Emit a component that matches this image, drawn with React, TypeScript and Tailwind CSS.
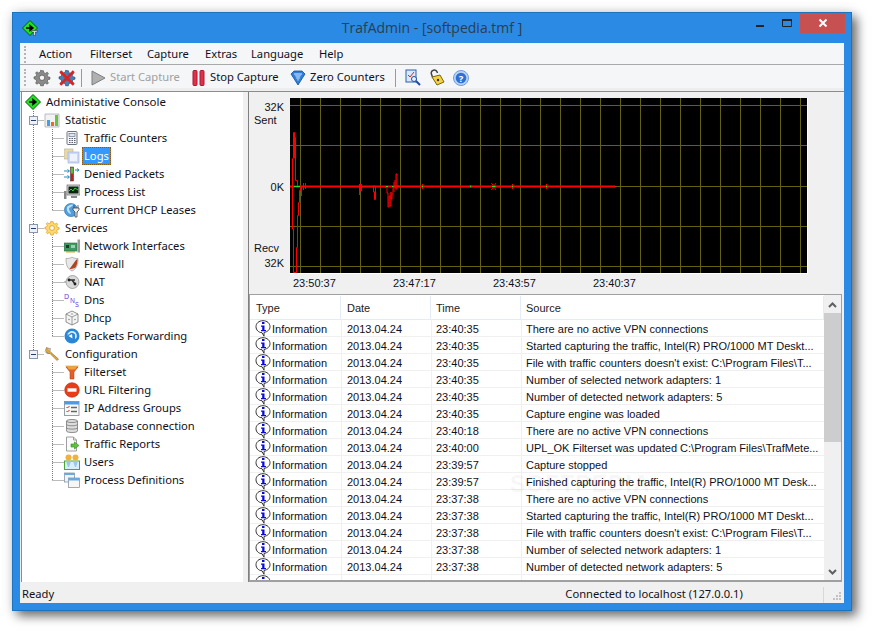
import React from "react";

const font = { fontFamily: '"Noto Sans", Tahoma, sans-serif' };
const listFont = { fontFamily: '"Liberation Sans", Arial, sans-serif' };

type S = { children: React.ReactNode; w?: number; className?: string };
const Ico = ({ children, w = 16, className = "" }: S) => (
  <svg width={w} height={w} viewBox="0 0 16 16" className={"shrink-0 " + className}>{children}</svg>
);

const Gear = ({ c = "#8a8a8a", d = "#555" }: { c?: string; d?: string }) => (
  <g>
    <path d="M8 1.500l1.200 0 .4 1.800 1.400.6 1.600-1 1.100 1.100-1 1.600.6 1.400 1.800.4v1.600l-1.800.4-.6 1.400 1 1.600-1.100 1.100-1.600-1-1.400.6-.4 1.800H6.800l-.4-1.800-1.400-.6-1.600 1-1.100-1.100 1-1.600-.6-1.400L.9 8.600V7l1.800-.4.6-1.400-1-1.600 1.100-1.100 1.600 1 1.400-.6.4-1.800z" fill={c} stroke={d} strokeWidth=".6" />
    <circle cx="8" cy="7.800" r="2.400" fill="#f5f6f8" stroke={d} strokeWidth=".7" />
  </g>
);

const RootIcon = ({ t }: { t?: boolean }) => (
  <Ico>
    <path d="M8 .5L15.500 8 8 15.500.5 8z" fill="#22e022" stroke="#0a5a0a" />
    <path d="M4 8h6M8 5.500L11 8l-3 2.500z" stroke="#000" strokeWidth="1.400" fill="#000" />
    {t && <path d="M9.500 10.500h6v1.500h-2v3.500h-2V12h-2z" fill="#ddd" stroke="#222" strokeWidth=".5" />}
  </Ico>
);

const icons: Record<string, React.ReactNode> = {
  statistic: (
    <Ico>
      <path d="M1 2h14v13H1z" fill="#f2f2f2" stroke="#aab" strokeWidth=".8" />
      <rect x="3" y="8" width="3" height="6" fill="#4a9be8" />
      <rect x="7" y="10" width="3" height="4" fill="#ef6a1e" />
      <rect x="11" y="3" width="3" height="11" fill="#6cc23a" />
    </Ico>
  ),
  counters: (
    <Ico>
      <rect x="3" y="1.500" width="10" height="13" rx="1" fill="#f4f6f8" stroke="#6d7680" />
      <rect x="5" y="3.500" width="6" height="3" fill="#dbe7f2" stroke="#6d7680" strokeWidth=".7" />
      <path d="M5 8.500h1.500M7.500 8.500H9M10 8.500h1.500M5 10.500h1.500M7.500 10.500H9M10 10.500h1.500M5 12.500h1.500M7.500 12.500H9M10 12.500h1.500" stroke="#56616c" />
    </Ico>
  ),
  logs: (
    <Ico>
      <rect x="0" y="1" width="9" height="10" fill="#ead9a8" stroke="#b9b7a0" strokeWidth=".7" />
      <rect x="4" y="4" width="11" height="11" fill="#cdd8f5" stroke="#a6b4dc" strokeWidth=".7" />
      <rect x="6" y="6" width="7" height="7" fill="#eef2fd" />
    </Ico>
  ),
  denied: (
    <Ico>
      <rect x="6.500" y="1" width="3" height="14" fill="#b8231f" stroke="#333" strokeWidth=".5" />
      <rect x="7" y="1.500" width="2" height="6" fill="#55c13b" />
      <path d="M0 5h5M3.500 3.500L5.500 5l-2 1.500M11 4h4M13 2.500L15 4l-2 1.500M0 11h5M3.500 9.500L5.500 11l-2 1.500" stroke="#1f8fb8" fill="none" />
    </Ico>
  ),
  process: (
    <Ico>
      <rect x="3" y="1" width="13" height="10" fill="#d8d8d8" stroke="#666" strokeWidth=".7" />
      <rect x="4.500" y="2.500" width="10" height="7" fill="#0c2410" />
      <path d="M5 7l2-2 2 2 2-3 3 2" stroke="#3fe04a" fill="none" strokeWidth=".9" />
      <path d="M7 12h6v2H7z" fill="#888" />
      <rect x="0" y="7" width="2.500" height="8" fill="#888" />
    </Ico>
  ),
  dhcpl: (
    <Ico>
      <circle cx="7" cy="8" r="6.600" fill="#4d9fe0" stroke="#2f6ea8" strokeWidth=".6" />
      <path d="M3 5c2-2 5-3 6-2-1 2-4 2-4 4s2 3 2 5c-2 0-5-3-4-7z" fill="#bfe0f7" />
      <path d="M10 3v3M14 3v3M9 6h6v2l-2 2v5h-2v-5L9 8z" fill="#eee" stroke="#444" strokeWidth=".8" />
    </Ico>
  ),
  services: (
    <Ico>
      <g transform="translate(0 .2)"><Gear c="#fcd96a" d="#d89010" /></g>
    </Ico>
  ),
  network: (
    <Ico>
      <path d="M0 5h13v8H0z" fill="#3f9a62" stroke="#2d6a45" strokeWidth=".6" />
      <rect x="2" y="7" width="3" height="3" fill="#1d3a28" />
      <rect x="7" y="7" width="4" height="3" fill="#9bd0ae" />
      <path d="M2 13h9v1.500H2z" fill="#c8a93c" />
      <path d="M13.500 1.500H16v13h-2.500z" fill="#9a9a9a" />
    </Ico>
  ),
  firewall: (
    <Ico>
      <path d="M2 2.500C5 2.500 7 2 8 1c1 1 3 1.500 6 1.500 0 6-1 10-6 12.500C3 12.500 2 8.500 2 2.500z" fill="#e8e8e8" stroke="#999" strokeWidth=".7" />
      <path d="M13.500 3c0 3-.5 6-2 8.500-2 1-5 1.500-6 1.500L12 4z" fill="#b4431f" />
    </Ico>
  ),
  nat: (
    <Ico>
      <circle cx="8.500" cy="8" r="6.500" fill="#d9d9d9" stroke="#888" strokeWidth=".7" />
      <path d="M5 6l6 0M8 6l3 4" stroke="#333" strokeWidth="1.500" />
      <circle cx="5" cy="6" r="1.400" fill="#222" />
      <circle cx="11" cy="10" r="1.400" fill="#222" />
      <path d="M0 8h2" stroke="#888" />
    </Ico>
  ),
  dns: (
    <svg width="16" height="17" viewBox="0 0 16 17" className="shrink-0">
      <text x="0" y="7" fontSize="7" fill="#6a3fe0" style={font}>D</text>
      <text x="6" y="11" fontSize="6.500" fill="#6a3fe0" style={font}>N</text>
      <text x="11" y="15" fontSize="7" fill="#6a3fe0" style={font}>S</text>
    </svg>
  ),
  dhcp: (
    <Ico>
      <path d="M8 1l6 3v8l-6 3-6-3V4z" fill="#f4f4f4" stroke="#777" strokeWidth=".8" />
      <path d="M2 4l6 3 6-3M8 7v8" stroke="#777" fill="none" strokeWidth=".7" />
      <circle cx="8" cy="4" r=".7" fill="#777" />
      <circle cx="5" cy="9.500" r=".7" fill="#777" />
      <circle cx="11" cy="9.500" r=".7" fill="#777" />
    </Ico>
  ),
  forward: (
    <Ico>
      <circle cx="8" cy="8" r="7.500" fill="#2a86d6" />
      <path d="M4 8a4 4 0 117 2.500" fill="none" stroke="#d8eefc" strokeWidth="1.800" />
      <path d="M3 6.500h8v4l-4 3-3-3z" fill="#2a86d6" />
      <path d="M3.500 5.500l4 2.500-3.500 2z" fill="#fff" transform="rotate(180 6 8)" />
    </Ico>
  ),
  config: (
    <Ico>
      <path d="M2.500 1.500l3 1.500v2l1.500 1.500L14.500 13l-1.500 1.500L6 7.500H4L1.500 4.500z" fill="#e3a43c" stroke="#8d6a2c" strokeWidth=".6" />
      <path d="M1 5.500c1 1.500 3 2 3.500 2" stroke="#888" fill="none" />
      <path d="M3.500 2l3 .5-.5 3" fill="#c8c8c8" stroke="#888" strokeWidth=".6" />
    </Ico>
  ),
  filterset: (
    <Ico>
      <path d="M1 1.500h14l-1 1.500H2z" fill="#f6c65b" />
      <path d="M2 3h12L10 8v7H6V8z" fill="#e4612a" stroke="#a33a14" strokeWidth=".5" />
      <path d="M3 3h10l-2 2.500H5z" fill="#f3a13b" />
    </Ico>
  ),
  url: (
    <Ico>
      <circle cx="8" cy="8" r="7.300" fill="#e83e17" stroke="#b52a0c" strokeWidth=".6" />
      <rect x="3.500" y="6.300" width="9" height="3.400" fill="#fff" />
    </Ico>
  ),
  ipgroups: (
    <Ico>
      <rect x=".5" y="1.500" width="14.500" height="14" fill="#f8f8f8" stroke="#7d8793" strokeWidth=".8" />
      <rect x=".5" y="1.500" width="14.500" height="3" fill="#4a9be8" />
      <path d="M2.500 7l1 1 2-2M2.500 11l1 1 2-2" stroke="#d22" fill="none" />
      <path d="M7 7.500h6M7 11.500h6" stroke="#666" strokeWidth="1.300" />
    </Ico>
  ),
  database: (
    <Ico>
      <path d="M2.500 3c0-2 11-2 11 0v10c0 2-11 2-11 0z" fill="#dcdcdc" stroke="#777" strokeWidth=".8" />
      <path d="M2.500 3c0 2 11 2 11 0M2.500 6.300c0 2 11 2 11 0M2.500 9.600c0 2 11 2 11 0" stroke="#777" fill="none" strokeWidth=".8" />
    </Ico>
  ),
  reports: (
    <Ico>
      <path d="M2.500 1h7l3 3v11h-10z" fill="#fafafa" stroke="#888" strokeWidth=".8" />
      <path d="M9.500 1v3h3" fill="none" stroke="#888" strokeWidth=".8" />
      <path d="M7 8h3.500V6l4.500 3.500-4.500 3.500v-2H7z" fill="#62c13d" stroke="#2e8a1d" strokeWidth=".6" />
    </Ico>
  ),
  users: (
    <Ico>
      <rect x=".5" y="7" width="15" height="8.500" fill="#d8eefc" stroke="#4aa83a" />
      <circle cx="4.500" cy="3.500" r="3" fill="#f4b03a" />
      <circle cx="11.500" cy="3.500" r="3" fill="#f4b03a" />
      <path d="M2 7h5l-2 6h-1zM9 7h5l-2 6h-1z" fill="#9bc6e8" />
    </Ico>
  ),
  defs: (
    <Ico>
      <rect x=".5" y="1" width="10" height="9" fill="#eef4fb" stroke="#7d8793" strokeWidth=".7" />
      <rect x=".5" y="1" width="10" height="2" fill="#6aa9e0" />
      <rect x="4.500" y="6" width="11" height="9.500" fill="#f6f6f6" stroke="#7d8793" strokeWidth=".7" />
      <rect x="4.500" y="6" width="11" height="2.500" fill="#6aa9e0" />
    </Ico>
  ),
};

type Node = { t: string; i: string; last?: boolean; sel?: boolean };
const groups: { t: string; i: string; kids: Node[]; last?: boolean }[] = [
  {
    t: "Statistic", i: "statistic", kids: [
      { t: "Traffic Counters", i: "counters" },
      { t: "Logs", i: "logs", sel: true },
      { t: "Denied Packets", i: "denied" },
      { t: "Process List", i: "process" },
      { t: "Current DHCP Leases", i: "dhcpl", last: true },
    ],
  },
  {
    t: "Services", i: "services", kids: [
      { t: "Network Interfaces", i: "network" },
      { t: "Firewall", i: "firewall" },
      { t: "NAT", i: "nat" },
      { t: "Dns", i: "dns" },
      { t: "Dhcp", i: "dhcp" },
      { t: "Packets Forwarding", i: "forward", last: true },
    ],
  },
  {
    t: "Configuration", i: "config", last: true, kids: [
      { t: "Filterset", i: "filterset" },
      { t: "URL Filtering", i: "url" },
      { t: "IP Address Groups", i: "ipgroups" },
      { t: "Database connection", i: "database" },
      { t: "Traffic Reports", i: "reports" },
      { t: "Users", i: "users" },
      { t: "Process Definitions", i: "defs", last: true },
    ],
  },
];

const dot = { stroke: "#777", strokeDasharray: "1 1", fill: "none" };

const Guide = ({ w, x, v, h, box, short }: { w: number; x: number; v?: boolean; h?: boolean; box?: boolean; short?: boolean }) => (
  <svg width={w} height={18} viewBox={`0 0 ${w} 18`} className="shrink-0">
    {v && <path d={`M${x + 0.5} 0V${short ? 9 : 18}`} {...dot} />}
    {h && <path d={`M${x + 0.5} 9.500H${w}`} {...dot} />}
    {box && (
      <g>
        <rect x={x - 4 + 0.5} y={5.5} width={8} height={8} fill="#eef2f8" stroke="#8a97a8" />
        <path d={`M${x - 2} 9.500h5`} stroke="#203f70" />
      </g>
    )}
  </svg>
);

const Tree = () => (
  <div className="w-[222px] shrink-0 bg-white pt-px border-l border-[#8c8c8c] overflow-hidden text-[11.200px] text-[#10101a]">
    <div className="flex items-center h-[18px] pl-[3px]">
      <RootIcon />
      <span className="ml-[5px] text-[11.500px] whitespace-nowrap">Administative Console</span>
    </div>
    {groups.map((g) => (
      <div key={g.t}>
        <div className="flex items-center h-[18px]">
          <Guide w={22} x={11} v box h short={g.last} />
          {icons[g.i]}
          <span className="ml-[5px] whitespace-nowrap">{g.t}</span>
        </div>
        {g.kids.map((k) => (
          <div key={k.t} className="flex items-center h-[18px]">
            <Guide w={22} x={11} v={!g.last} />
            <Guide w={20} x={8} v h short={k.last} />
            {icons[k.i]}
            {k.sel ? (
              <span className="ml-[2px] px-px h-[18px] leading-[16px] border border-dotted border-[#8a5a10] bg-[#3399ff] text-white whitespace-nowrap">{k.t}</span>
            ) : (
              <span className="ml-[4px] whitespace-nowrap">{k.t}</span>
            )}
          </div>
        ))}
      </div>
    ))}
  </div>
);

const hLines = [105, 145, 186, 226, 266];
const vLines = Array.from({ length: 26 }, (_, i) => 300 + i * 20);

const Chart = () => (
  <svg width="517" height="175" viewBox="290 98 517 175" className="block bg-black">
    {hLines.map((y) => (
      <path key={y} d={`M290 ${y + 0.5}H807`} stroke="#63630f" />
    ))}
    {vLines.map((x) => (
      <path key={x} d={`M${x + 0.5} 98V273`} stroke="#63630f" />
    ))}
    <path d="M290 186.500H615" stroke="#ff0000" strokeWidth="2" />
    <path
      d="M292.500 186V158.500M292.500 158.500V229M292.500 229H293.500V272.500H296.500V247.500H297.500V215.500H298.500V202.500H299.500V190.500H300.500V186M293.500 158.500V132.500H294.500V158.500M294.500 137.500H295.500V180.500H297.500V186M301.500 186V196M303.500 183V190M305.500 183V189"
      stroke="#ff0000"
      fill="none"
    />
    <rect x="359" y="184" width="3" height="7" fill="#ff0000" />
    <path d="M359.500 186V195M374.500 186H373.500V192H375.500V199.500H374.500V192M375.500 192V186M385.500 186V188M387 186V193H388V207H389V196H390V206H391V192V199H392V194H393V186M394 182V192M395 180V188H396V174H397V189H395M398 185V187" stroke="#ff0000" fill="none" />
    <path d="M422.500 184V189M470.500 185V188M491.500 183L496 190M496 183L491.500 190M512.500 184V189M546.500 184V189" stroke="#ff0000" fill="none" />
    <path d="M294 186.500H300M386 186.500H388M392 186.500H393.500M422 186.500H423M470 186.500H471M492 186.500H495.500M512 186.500H513M546 186.500H547" stroke="#22e022" />
  </svg>
);

const InfoIcon = () => (
  <svg width="16" height="17" viewBox="0 0 16 17" className="shrink-0">
    <path d="M8 .7C3.800.7 1 3.300 1 6.700s2.800 6 6 6l2 3.500v-3.700c3.400-.7 6-2.600 6-5.800C15 3.300 12.200.7 8 .7z" fill="#fff" stroke="#333" strokeWidth="1" />
    <rect x="7" y="2" width="2.500" height="2" fill="#0a0ae0" />
    <path d="M6 5.500h3.500v4.500H11v1.200H6V10h1.200V6.700H6z" fill="#0a0ae0" />
  </svg>
);

const d = "2013.04.24";
const vpn = "There are no active VPN connections";
const started = "Started capturing the traffic, Intel(R) PRO/1000 MT Deskt...";
const file = "File with traffic counters doesn't exist: C:\\Program Files\\T...";
const sel = "Number of selected network adapters: 1";
const det = "Number of detected network adapters: 5";
const rows: [string, string][] = [
  ["23:40:35", vpn],
  ["23:40:35", started],
  ["23:40:35", file],
  ["23:40:35", sel],
  ["23:40:35", det],
  ["23:40:35", "Capture engine was loaded"],
  ["23:40:18", vpn],
  ["23:40:00", "UPL_OK Filterset was updated C:\\Program Files\\TrafMete..."],
  ["23:39:57", "Capture stopped"],
  ["23:39:57", "Finished capturing the traffic, Intel(R) PRO/1000 MT Desk..."],
  ["23:37:38", vpn],
  ["23:37:38", started],
  ["23:37:38", file],
  ["23:37:38", sel],
  ["23:37:38", det],
  ["23:37:38", "Capture engine was loaded"],
];

const Th = ({ children, w, pl }: { children: React.ReactNode; w: string; pl: string }) => (
  <div className={`${w} ${pl} shrink-0 h-full pt-[2px] border-r border-[#e3ecf7] flex items-center`}>{children}</div>
);

const LogList = () => (
  <div className="flex-1 min-h-0 relative flex border-t border-l border-b-2 border-r border-[#a0a0a0] bg-white overflow-hidden mr-[2px] text-[11px] text-[#10101a]" style={listFont}>
    <div className="flex-1 min-w-0 overflow-hidden pt-px">
      <div className="flex h-[24px] border-b border-[#e3ecf7] text-[#222]">
        <Th w="w-[91px]" pl="pl-[6px]">Type</Th>
        <Th w="w-[90px]" pl="pl-[6px]">Date</Th>
        <Th w="w-[90px]" pl="pl-[5px]">Time</Th>
        <div className="flex-1 pl-[5px] pt-[2px] flex items-center border-r border-[#e3ecf7]">Source</div>
      </div>
      {rows.map(([t, s], i) => (
        <div key={i} className="flex h-[17px] border-b border-[#f0f0f0] whitespace-nowrap items-center">
          <div className="w-[91px] shrink-0 h-full flex items-center pl-[5px]">
            <InfoIcon />
            <span className="ml-[1px] pt-[2px]">Information</span>
          </div>
          <div className="w-[90px] shrink-0 h-full flex items-center pt-[2px] pl-[5px] border-l border-[#f0f0f0]">{d}</div>
          <div className="w-[90px] shrink-0 h-full flex items-center pt-[2px] pl-[4px] border-l border-[#f0f0f0]">{t}</div>
          <div className="flex-1 h-full flex items-center pt-[2px] pl-[4px] border-l border-[#f0f0f0] overflow-hidden">{s}</div>
        </div>
      ))}
    </div>
    <div className="w-[17px] shrink-0 bg-[#f0f0f0] flex flex-col items-center pt-px">
      <div className="h-[17px] w-full flex items-center justify-center">
        <svg width="9" height="6" viewBox="0 0 9 6"><path d="M1 5l3.500-3.500L8 5" stroke="#606060" strokeWidth="2" fill="none" /></svg>
      </div>
      <div className="w-full h-[129px] bg-[#cdcdcd]" />
      <div className="flex-1" />
      <div className="h-[17px] w-full flex items-center justify-center">
        <svg width="9" height="6" viewBox="0 0 9 6"><path d="M1 1l3.500 3.500L8 1" stroke="#606060" strokeWidth="2" fill="none" /></svg>
      </div>
    </div>
    <div className="absolute left-[260px] top-[172px] text-[23px] font-bold tracking-[1px] text-[#000000]/[0.05] pointer-events-none">SOFTPEDIA</div>
  </div>
);

const Graph = () => (
  <div className="h-[202px] shrink-0 flex bg-[#f0f0f0] text-[11px] text-[#10101a]" style={listFont}>
    <div className="w-[41px] shrink-0 flex flex-col pt-[8px] pl-[5px] leading-[14px]">
      <div className="text-right pr-[6px]">32K</div>
      <div className="-mt-px">Sent</div>
      <div className="text-right pr-[6px] mt-[53px]">0K</div>
      <div className="mt-[47px]">Recv</div>
      <div className="text-right pr-[6px] mt-px">32K</div>
    </div>
    <div className="pt-[6px]">
      <div className="border-r border-b border-white">
        <Chart />
      </div>
      <div className="flex pl-[3px] pt-px leading-[16px]">
        <span className="w-[100px]">23:50:37</span>
        <span className="w-[100px]">23:47:17</span>
        <span className="w-[100px]">23:43:57</span>
        <span className="w-[100px]">23:40:37</span>
      </div>
    </div>
  </div>
);

const Grip = () => (
  <div className="w-[3px] h-[17px] mr-[3px] shrink-0 border-l-2 border-dotted border-[#b5b5b5]" />
);

const Sep = () => <div className="w-px h-[18px] bg-[#9a9a9a] shrink-0" />;

const Toolbar = () => (
  <div className="h-[23px] shrink-0 flex items-center bg-[#f5f6f8] pl-[4px] pt-[2px] text-[11.200px] text-[#10101a] whitespace-nowrap">
    <Grip />
    <Ico w={18} className="ml-[3px]"><Gear /></Ico>
    <Ico w={18} className="ml-[7px]">
      <g><Gear c="#4a80b8" d="#24476e" /></g>
      <path d="M2 2l12 12M14 2L2 14" stroke="#dd2222" strokeWidth="2.400" />
    </Ico>
    <div className="ml-[5px]"><Sep /></div>
    <svg width="15" height="16" viewBox="0 0 15 16" className="ml-[9px] shrink-0">
      <path d="M1 1l13 7-13 7z" fill="#b0b0b0" stroke="#7e7e7e" />
    </svg>
    <span className="ml-[4px] w-[69px] text-[#a0a0a0]">Start Capture</span>
    <svg width="13" height="16" viewBox="0 0 13 16" className="ml-[13px] shrink-0">
      <rect x="1" y="0.500" width="4" height="15" rx="1" fill="#e0304a" stroke="#a81830" />
      <rect x="8" y="0.500" width="4" height="15" rx="1" fill="#e0304a" stroke="#a81830" />
    </svg>
    <span className="ml-[5px] w-[70px]">Stop Capture</span>
    <svg width="16" height="16" viewBox="0 0 16 16" className="ml-[10px] shrink-0">
      <path d="M1 4l3-3h8l3 3-7 11z" fill="#2e7fdc" stroke="#124f9c" strokeWidth=".8" />
      <path d="M4 3.500h8L8 11z" fill="#dff0ff" />
      <path d="M6 4v4M8 4v6M10 4v4" stroke="#2e7fdc" />
    </svg>
    <span className="ml-[4px] w-[75px]">Zero Counters</span>
    <div className="ml-[10px]"><Sep /></div>
    <svg width="17" height="17" viewBox="0 0 17 17" className="ml-[9px] shrink-0">
      <rect x="1" y="1" width="10" height="12" fill="#dbe8fb" stroke="#2b5fb0" />
      <path d="M3 6l2 2 4-5" stroke="#c83030" fill="none" />
      <circle cx="9" cy="10" r="2.500" fill="#eaf3ff" stroke="#1a4f9a" />
      <path d="M11 12l4 4" stroke="#1a4f9a" strokeWidth="2" />
    </svg>
    <svg width="16" height="17" viewBox="0 0 16 17" className="ml-[7px] shrink-0">
      <path d="M3 8V4a3 3 0 016 0v1" stroke="#444" strokeWidth="1.500" fill="none" transform="rotate(-20 6 6)" />
      <path d="M3 8l8-2 4 7-7 3z" fill="#f4d340" stroke="#7a6410" />
      <circle cx="9" cy="11" r="1.200" fill="#333" />
    </svg>
    <svg width="16" height="16" viewBox="0 0 16 16" className="ml-[8px] shrink-0">
      <circle cx="8" cy="8" r="7.500" fill="#b9d3f7" stroke="#6f9be0" />
      <circle cx="8" cy="8" r="5.300" fill="#2c6fd6" />
      <text x="8" y="11.500" textAnchor="middle" fontSize="9.500" fontWeight="700" fill="#fff" style={font}>?</text>
    </svg>
  </div>
);

const menus: [string, string][] = [
  ["Action", "w-[51px]"],
  ["Filterset", "w-[57px]"],
  ["Capture", "w-[58px]"],
  ["Extras", "w-[46px]"],
  ["Language", "w-[68px]"],
  ["Help", "w-[40px]"],
];

export default function App() {
  return (
    <div className="w-[872px] h-[631px] bg-white pl-[12px] pt-[12px] overflow-hidden" style={font}>
      <div className="w-[840px] h-[599px] bg-[#2a8ae4] border border-[#1c74bf] shadow-[5px_5px_10px_rgba(0,0,0,0.55),0_0_12px_rgba(0,0,0,0.12)] flex flex-col">
        <div className="h-[30px] shrink-0 relative flex items-center justify-center">
          <div className="absolute left-[9px] top-[7px]"><RootIcon t /></div>
          <span className="text-[14px] text-[#2c3e50] -mt-[1px]" style={{ fontFamily: '"Open Sans", sans-serif' }}>TrafAdmin - [softpedia.tmf ]</span>
          <div className="absolute right-[6px] top-0 flex items-start h-[20px]">
            <svg width="26" height="20" viewBox="0 0 26 20"><rect x="9" y="12" width="8" height="2" fill="#222" /></svg>
            <svg width="27" height="20" viewBox="0 0 27 20"><path d="M9.500 6.500h9v7h-9z" fill="none" stroke="#222" /><rect x="9" y="6" width="10" height="2" fill="#222" /></svg>
            <div className="w-[45px] h-[20px] bg-[#c75050] flex items-center justify-center">
              <svg width="10" height="10" viewBox="0 0 10 10"><path d="M1.500 1.500l7 7M8.500 1.500l-7 7" stroke="#fff" strokeWidth="2" /></svg>
            </div>
          </div>
        </div>
        <div className="mx-[7px] mb-[7px] flex-1 min-h-0 bg-[#f0f0f0] flex flex-col">
          <div className="h-[22px] shrink-0 bg-[#f5f6f8] border-b border-[#a9a9a9] flex items-center pl-[4px] pt-[2px] text-[11.200px] text-[#10101a]">
            <Grip />
            <div className="w-[9px]" />
            {menus.map(([m, w]) => (
              <span key={m} className={w}>{m}</span>
            ))}
          </div>
          <Toolbar />
          <div className="h-[3px] shrink-0 bg-[#eeeeee]" />
          <div className="flex-1 min-h-0 flex pl-px pb-px border-t border-[#8c8c8c]">
            <Tree />
            <div className="w-[5px] shrink-0" />
            <div className="flex-1 min-w-0 flex flex-col border-l border-[#808080]">
              <Graph />
              <LogList />
            </div>
          </div>
          <div className="h-[20px] shrink-0 flex items-center pl-[2px] pr-[2px] pt-[3px] text-[11.200px] text-[#10101a] whitespace-nowrap">
            <span className="w-[544px]">Ready</span>
            <span className="w-[258px]">Connected to localhost (127.0.0.1)</span>
            <div className="w-px h-[16px] bg-[#d8d8d8]" />
            <svg width="12" height="12" viewBox="0 0 12 12" className="ml-[6px] mt-[4px]">
              <path d="M9 1h2v2H9zM6 4h2v2H6zM9 4h2v2H9zM3 7h2v2H3zM6 7h2v2H6zM9 7h2v2H9z" fill="#c2c2c2" />
            </svg>
          </div>
        </div>
      </div>
    </div>
  );
}
